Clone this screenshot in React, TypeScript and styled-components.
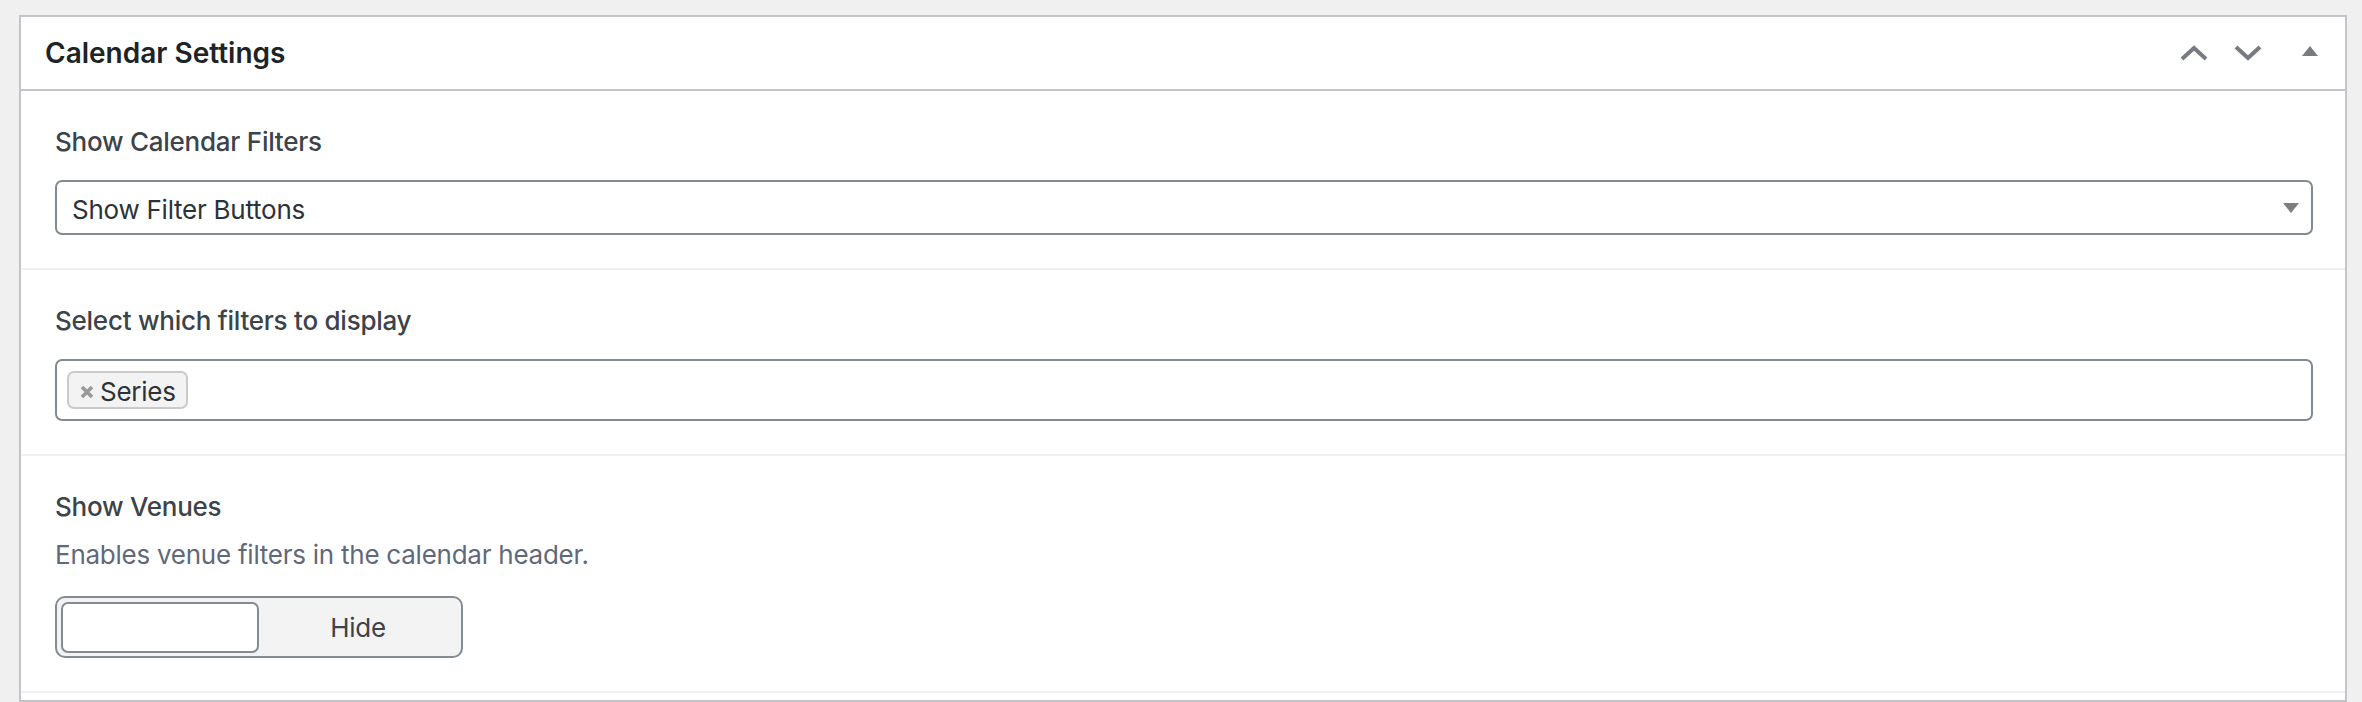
import styled, { createGlobalStyle } from "styled-components";

const GlobalStyle = createGlobalStyle`
  html, body {
    margin: 0;
    padding: 0;
    background: #f0f0f1;
  }
  body {
    font-family: Inter, "Liberation Sans", sans-serif;
    -webkit-font-smoothing: antialiased;
  }
  * {
    box-sizing: border-box;
  }
`;

const ChevronUp = () => (
  <svg width="28" height="16" viewBox="0 0 28 16" fill="none">
    <polyline points="2,14 14,3 26,14" stroke="#787c82" strokeWidth="4" />
  </svg>
);

const ChevronDown = () => (
  <svg width="28" height="16" viewBox="0 0 28 16" fill="none">
    <polyline points="2,2 14,13 26,2" stroke="#787c82" strokeWidth="4" />
  </svg>
);

const Caret = ({ up }: { up?: boolean }) => (
  <svg width="16" height="10" viewBox="0 0 16 10">
    {up ? (
      <polygon points="0,10 8,0 16,10" fill="#787c82" />
    ) : (
      <polygon points="0,0 16,0 8,10" fill="#7e7e80" />
    )}
  </svg>
);

const RemoveIcon = () => (
  <svg width="14" height="14" viewBox="0 0 14 14">
    <path d="M2 2 L12 12 M12 2 L2 12" stroke="#999" strokeWidth="3.6" />
  </svg>
);

const App = () => {
  const filters = ["Series"];

  return (
    <Page>
      <GlobalStyle />
      <Postbox>
        <Header>
          <Title>Calendar Settings</Title>
          <HandleButton aria-label="Move up">
            <ChevronUp />
          </HandleButton>
          <HandleButton aria-label="Move down">
            <ChevronDown />
          </HandleButton>
          <ToggleIndicator aria-label="Toggle panel">
            <Caret up />
          </ToggleIndicator>
        </Header>

        <Field>
          <Label>Show Calendar Filters</Label>
          <SelectBox>
            <SelectValue>Show Filter Buttons</SelectValue>
            <Caret />
          </SelectBox>
        </Field>

        <Field>
          <Label>Select which filters to display</Label>
          <MultiSelect>
            {filters.map((f) => (
              <Tag key={f}>
                <RemoveIcon />
                {f}
              </Tag>
            ))}
          </MultiSelect>
        </Field>

        <Field>
          <Label>Show Venues</Label>
          <Description>Enables venue filters in the calendar header.</Description>
          <Toggle>
            <Thumb />
            <ToggleText>Hide</ToggleText>
          </Toggle>
        </Field>
      </Postbox>
    </Page>
  );
};

const Page = styled.div`
  padding: 15px 15px 0 19px;
  height: 100vh;
  overflow: hidden;
`;

const Postbox = styled.div`
  background: #fff;
  border: 2px solid #c3c4c7;
  min-height: calc(100vh - 15px);
`;

const Header = styled.div`
  display: flex;
  align-items: center;
  height: 74px;
  padding-left: 24px;
  border-bottom: 2px solid #c3c4c7;
`;

const Title = styled.h2`
  flex: 1;
  margin: 0;
  font-size: 28px;
  font-weight: 600;
  color: #1d2327;
`;

const HandleButton = styled.button`
  width: 54px;
  height: 72px;
  padding: 0;
  border: 0;
  background: none;
  display: flex;
  align-items: center;
  justify-content: center;
`;

const ToggleIndicator = styled(HandleButton)`
  width: 70px;
  padding-bottom: 4px;
`;

const Field = styled.div`
  padding: 33px 32px 33px 34px;
  border-bottom: 2px solid #f0f0f1;
  font-size: 26px;
  letter-spacing: -0.25px;
`;

const Label = styled.div`
  font-weight: 500;
  line-height: 36px;
  color: #3c434a;
  margin-bottom: 20px;

  & + p {
    margin-top: -8px;
  }
`;

const Description = styled.p`
  margin: 0 0 23px;
  line-height: 36px;
  color: #5f697a;
`;

const SelectBox = styled.div`
  display: flex;
  align-items: center;
  justify-content: space-between;
  height: 55px;
  padding: 0 12px 0 15px;
  border: 2px solid #828a92;
  border-radius: 7px;
  color: #2c3338;
`;

const SelectValue = styled.span`
  padding-top: 3px;
`;

const MultiSelect = styled.div`
  display: flex;
  align-items: center;
  gap: 8px;
  height: 62px;
  padding: 0 10px;
  border: 2px solid #828a92;
  border-radius: 7px;
`;

const Tag = styled.div`
  display: flex;
  align-items: center;
  gap: 6px;
  height: 38px;
  padding: 2px 10px 0 11px;
  background: #f3f3f3;
  border: 2px solid #cacaca;
  border-radius: 7px;
  color: #2c3338;

  svg {
    margin-top: 1px;
  }
`;

const Toggle = styled.div`
  display: flex;
  align-items: center;
  width: 408px;
  height: 62px;
  padding: 4px;
  background: #f3f3f3;
  border: 2px solid #848b93;
  border-radius: 10px;
`;

const Thumb = styled.div`
  width: 198px;
  height: 51px;
  background: #fff;
  border: 2px solid #848b93;
  border-radius: 7px;
`;

const ToggleText = styled.span`
  flex: 1;
  text-align: center;
  color: #3c434a;
`;

export default App;
